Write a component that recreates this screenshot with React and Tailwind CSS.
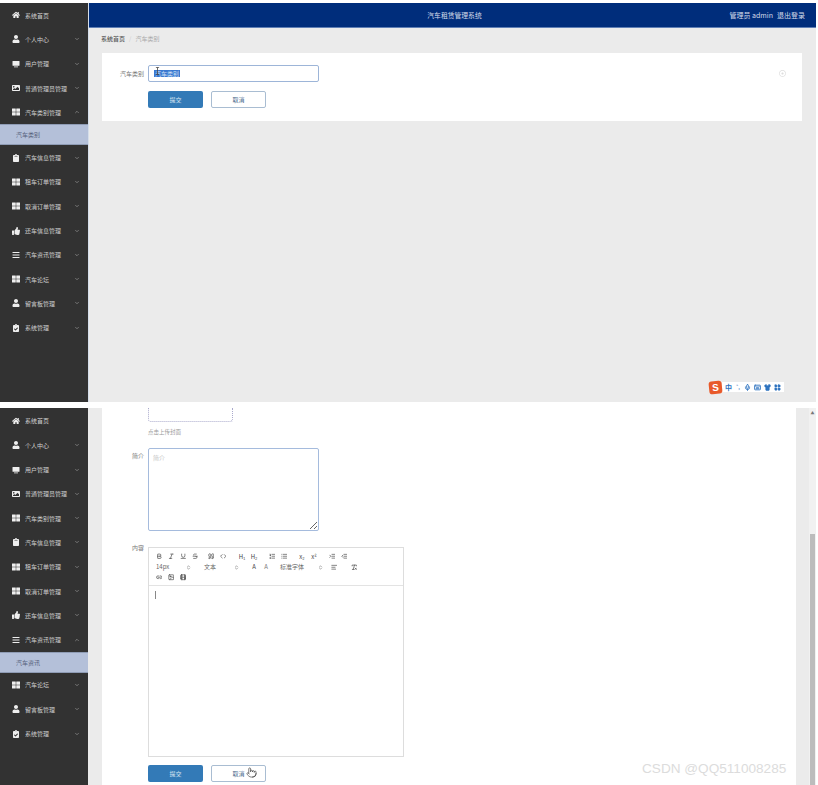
import {
  Bold, Italic, Underline, Strikethrough, Quote, Code, ListOrdered, List, Indent, Outdent,
  AlignLeft, RemoveFormatting, Link2, Image, Film, ChevronsUpDown, ChevronDown, ChevronUp, Mic, Keyboard, Shirt, LayoutGrid, Pointer,
} from 'lucide-react';
import { FaHome, FaUser, FaImage, FaThLarge, FaClipboard, FaThumbsUp, FaBars, FaClipboardCheck, FaRegDotCircle } from 'react-icons/fa';

const font = { fontFamily: '"Noto Sans CJK SC", "Liberation Sans", sans-serif' };

function ScreenIcon({ className }) {
  return (
    <svg viewBox="0 0 16 16" className={className} fill="currentColor">
      <rect x="1" y="2" width="14" height="9.5" rx="1" />
      <rect x="4" y="13" width="8" height="1.6" />
    </svg>
  );
}

const menu = [
  { icon: FaHome, label: '系统首页', plain: true },
  { icon: FaUser, label: '个人中心' },
  { icon: ScreenIcon, label: '用户管理' },
  { icon: FaImage, label: '普通管理员管理' },
  { icon: FaThLarge, label: '汽车类别管理', sub: '汽车类别' },
  { icon: FaClipboard, label: '汽车信息管理' },
  { icon: FaThLarge, label: '租车订单管理' },
  { icon: FaThLarge, label: '取消订单管理' },
  { icon: FaThumbsUp, label: '还车信息管理' },
  { icon: FaBars, label: '汽车资讯管理', sub: '汽车资讯' },
  { icon: FaThLarge, label: '汽车论坛' },
  { icon: FaUser, label: '留言板管理' },
  { icon: FaClipboardCheck, label: '系统管理' },
];

function Sidebar({ open, className }) {
  return (
    <div className={`w-[88px] shrink-0 bg-[#323232] ${className}`}>
      {menu.map((m) => {
        const Icon = m.icon;
        const isOpen = m.sub === open;
        return (
          <div key={m.label}>
            <div className="h-[24.3px] flex items-center pl-[12px] pr-[8px] text-[#cfcfcf]">
              <Icon className="w-[8px] h-[8px] text-[#eeeeee] shrink-0" />
              <span className="ml-[5px] text-[6px] flex-1 whitespace-nowrap">{m.label}</span>
              {!m.plain && (isOpen
                ? <ChevronUp className="w-[6px] h-[6px] text-[#b5b5b5] shrink-0" />
                : <ChevronDown className="w-[6px] h-[6px] text-[#b5b5b5] shrink-0" />)}
            </div>
            {isOpen && (
              <div className="h-[21px] flex items-center pl-[16px] bg-[#b4c0d9] border-y border-[#8f9cb5] text-[6px] text-[#56617c]">{m.sub}</div>
            )}
          </div>
        );
      })}
    </div>
  );
}

function Buttons({ hand }) {
  return (
    <div className="flex gap-[8px]">
      <div className="w-[55px] h-[17px] rounded-[2px] bg-[#337ab7] flex items-center justify-center text-[6px] text-[#dce8f3]">提交</div>
      <div className="relative w-[55px] h-[17px] rounded-[2px] bg-white border border-[#a9bdd2] flex items-center justify-center text-[6px] text-[#4a6a8c]">
        取消
        {hand && <Pointer className="absolute left-[34px] top-[1px] w-[11px] h-[11px] text-[#444444]" strokeWidth={1.5} />}
      </div>
    </div>
  );
}

function Sep({ w = 5 }) {
  return <div style={{ width: w }} className="shrink-0" />;
}

function Tool({ icon: Icon, text, w = 12, dim }) {
  return (
    <div style={{ width: w }} className={`shrink-0 flex items-center justify-center text-[6px] leading-none ${dim ? 'text-[#777777]' : 'text-[#444444]'}`}>
      {Icon ? <Icon className="w-[6.5px] h-[6.5px]" strokeWidth={2.4} /> : text}
    </div>
  );
}

function Pick({ text, w }) {
  return (
    <div style={{ width: w }} className="shrink-0 flex items-center justify-between pr-[1px] text-[6px] text-[#666666] leading-none whitespace-nowrap">
      {text}
      <ChevronsUpDown className="w-[5px] h-[5px] text-[#555555]" strokeWidth={2.4} />
    </div>
  );
}

function Editor() {
  return (
    <div className="w-[256px] h-[210px] border border-[#dddddd] flex flex-col">
      <div className="h-[38px] border-b border-[#e3e3e3] pl-[4px] pt-[4px] flex flex-col gap-[1.5px]">
        <div className="h-[9px] flex items-center">
          <Tool icon={Bold} /><Tool icon={Italic} /><Tool icon={Underline} /><Tool icon={Strikethrough} />
          <Sep w={4} />
          <Tool icon={Quote} /><Tool icon={Code} />
          <Sep w={7} />
          <Tool text="H₁" /><Tool text="H₂" />
          <Sep w={6} />
          <Tool icon={ListOrdered} /><Tool icon={List} />
          <Sep w={6} />
          <Tool text="x₂" /><Tool text="x²" />
          <Sep w={6} />
          <Tool icon={Indent} /><Tool icon={Outdent} />
        </div>
        <div className="h-[9px] flex items-center">
          <div className="w-[3px]" />
          <Pick text="14px" w={36} />
          <Sep w={12} />
          <Pick text="文本" w={36} />
          <Sep w={8} />
          <Tool text="A" /><Tool text="A" dim />
          <Sep w={8} />
          <Pick text="标准字体" w={44} />
          <Sep w={4} />
          <Tool icon={AlignLeft} />
          <Sep w={8} />
          <Tool icon={RemoveFormatting} />
        </div>
        <div className="h-[9px] flex items-center">
          <Tool icon={Link2} /><Tool icon={Image} /><Tool icon={Film} />
        </div>
      </div>
      <div className="pl-[6px] pt-[5px]"><div className="w-px h-[8px] bg-[#888888]" /></div>
    </div>
  );
}

export default function App() {
  return (
    <div style={font} className="relative w-[818px] h-[785px] overflow-hidden bg-white pt-[3px]">
      {/* 汽车类别 page */}
      <div className="flex h-[399px] w-[816px]">
        <Sidebar open="汽车类别" />
        <div className="flex-1 flex flex-col bg-[#ebebeb] border-l border-[#d5deea]">
          <div className="h-[25px] shrink-0 bg-[#002d7b] border-b border-[#5f7fb5] grid grid-cols-[1fr_auto_1fr] items-center text-[#d5dcea]">
            <div />
            <div className="text-[6.8px] whitespace-nowrap pl-[4px]">汽车租赁管理系统</div>
            <div className="flex items-center justify-end gap-[4px] pr-[11px] text-[7px] whitespace-nowrap">
              <span>管理员 admin</span>
              <span>退出登录</span>
            </div>
          </div>
          <div className="h-[20px] mb-[5px] shrink-0 flex items-center pl-[12px] text-[6px]">
            <span className="text-[#555555] font-medium">系统首页</span>
            <span className="mx-[4px] text-[#cccccc]">/</span>
            <span className="text-[#aaaaaa]">汽车类别</span>
          </div>
          <div className="relative ml-[13px] mr-[14px] h-[68px] bg-white pt-[12px] pl-[46px]">
            <div className="absolute left-0 top-[12px] w-[42px] h-[17px] flex items-center justify-end text-[6px] text-[#777777]">汽车类别</div>
            <div className="relative w-[171px] h-[17px] rounded-[2px] border border-[#9db5d8] flex items-center pl-[5px] text-[6px] mb-[9px]">
              <span className="bg-[#3a78d0] text-[#cfe0f5] leading-[7px] px-[1px]">汽车类别</span>
              <svg viewBox="0 0 6 10" className="absolute left-[6px] top-[1px] w-[5px] h-[8px]" fill="none" stroke="#444444" strokeWidth="1">
                <path d="M1 .5h4M3 .5v9M1 9.5h4" />
              </svg>
            </div>
            <Buttons />
            <FaRegDotCircle className="absolute right-[16px] top-[17px] w-[7px] h-[7px] text-[#dddddd]" />
          </div>
        </div>
      </div>

      <div className="h-[6px] bg-white" />

      {/* 汽车资讯 page */}
      <div className="flex h-[377px]">
        <Sidebar open="汽车资讯" className="pt-[0.8px]" />
        <div className="w-[14px] shrink-0 bg-[#ebebeb]" />
        <div className="flex-1 bg-white pl-[46px] min-w-0">
          <div className="w-[85px] h-[14px] rounded-b-[3px] border border-t-0 border-dotted border-[#a9a9cc]" />
          <div className="h-[7px] mt-[7px] text-[5.5px] leading-[7px] text-[#999999]">点击上传封面</div>
          <div className="relative mt-[12px]">
            <div className="absolute left-[-30px] top-[3px] w-[26px] text-right text-[6px] text-[#777777]">简介</div>
            <textarea readOnly placeholder="简介" className="block w-[171px] h-[83px] rounded-[2px] border border-[#a5bbdd] px-[4px] py-[4px] text-[6px] placeholder:text-[#c5c5c5] outline-none" />
          </div>
          <div className="relative mt-[16px]">
            <div className="absolute left-[-30px] top-[-4px] w-[26px] text-right text-[6px] text-[#777777]">内容</div>
            <Editor />
          </div>
          <div className="mt-[8px]"><Buttons hand /></div>
        </div>
        <div className="w-[13px] shrink-0 bg-[#ebebeb]" />
        <div className="w-[7px] shrink-0 bg-[#f1f1f1] flex flex-col">
          <div className="h-[126px] flex justify-center pt-[3px] text-[4px] leading-none text-[#777777]">▲</div>
          <div className="flex-1 mx-[1px] bg-[#bcbcbc]" />
        </div>
        <div className="w-[2px] shrink-0 bg-white" />
      </div>

      {/* input method bar */}
      <div className="absolute left-[709px] top-[380px] flex items-center h-[14px]">
        <div className="w-[13px] h-[13px] rounded-[3px] bg-[#e8592a] flex items-center justify-center text-white text-[10px] font-bold leading-none -rotate-6" style={{ fontFamily: '"Liberation Sans", sans-serif' }}>S</div>
        <div className="h-[10px] bg-white flex items-center gap-[3px] pl-[3px] pr-[3px] text-[#2f74c0]">
          <span className="text-[7px] leading-none font-bold">中</span>
          <span className="text-[6px] leading-none w-[6px] text-center">°,</span>
          <Mic className="w-[7px] h-[7px]" strokeWidth={3} />
          <Keyboard className="w-[7px] h-[7px]" strokeWidth={3} />
          <Shirt className="w-[7px] h-[7px] fill-[#2f74c0]" />
          <LayoutGrid className="w-[7px] h-[7px] fill-[#2f74c0]" />
        </div>
      </div>

      {/* watermark */}
      <div className="absolute left-[642px] top-[760px] text-[13.6px] leading-[18px] text-[#dcdcdc] whitespace-nowrap" style={{ fontFamily: '"Liberation Sans", sans-serif' }}>
        CSDN @QQ511008285
      </div>
    </div>
  );
}
